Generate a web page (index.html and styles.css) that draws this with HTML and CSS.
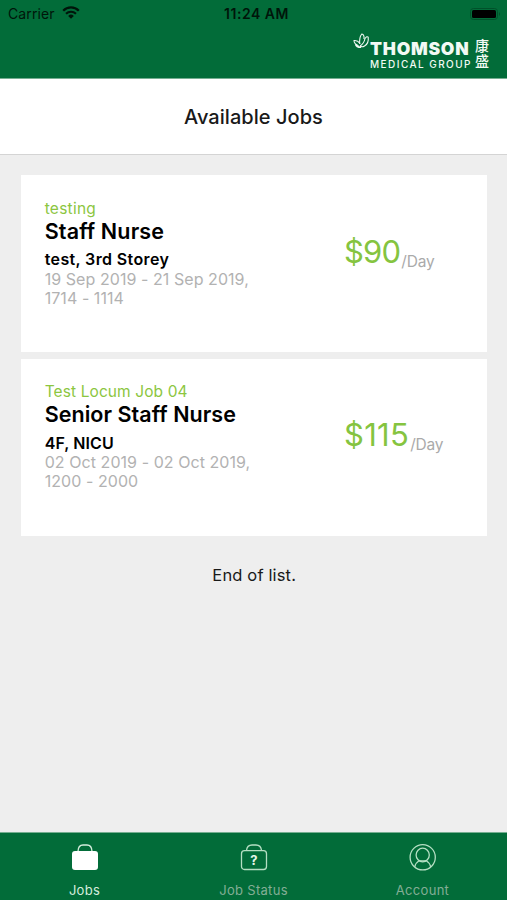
FILE: index.html
```html
<!DOCTYPE html>
<html lang="en">
<head>
<meta charset="utf-8">
<title>Available Jobs</title>
<link rel="stylesheet" href="styles.css">
</head>
<body>
<div class="app">
  <header class="header">
    <div class="status">
      <div class="carrier"><span>Carrier</span>
        <svg class="wifi" viewBox="0 0 18 13" width="18" height="13"><path d="M1.2 4.7a11 11 0 0 1 15.6 0" fill="none" stroke="#00150a" stroke-width="2.3"/><path d="M4 7.7a7.2 7.2 0 0 1 10 0" fill="none" stroke="#00150a" stroke-width="2.1"/><path d="M6.2 9.9a4 4 0 0 1 5.6 0L9 12.7z" fill="#00150a"/></svg>
      </div>
      <div class="time">11:24 AM</div>
      <svg class="battery" viewBox="0 0 33 14" width="33" height="14"><rect x="1.5" y="1.5" width="27" height="11" rx="3" fill="none" stroke="#00512a"/><rect x="3" y="3" width="24" height="8" rx="1.5" fill="#000"/><path d="M30 5q2 2 0 4z" fill="#00512a"/></svg>
    </div>
    <div class="brand">
      <svg class="butterfly" viewBox="0 0 17 17" width="17" height="17" fill="none" stroke="#f2faf4" stroke-width="1.1"><path d="M6.8 11Q6 4.5 8.8 1Q11.5 1.6 11 6"/><path d="M7 10.5Q4.5 7 1 7.6Q1 11 5.5 12.8"/><path d="M7 13Q11 10.5 12 5.5Q14 2.8 15.2 4.2Q16 10.5 11.5 13Q9 14.5 7 13"/><path d="M2.6 11.2Q3.3 14.2 8 14.2" stroke-width="1.6"/></svg>
      <div class="wordmark"><div class="thomson">THOMSON</div><div class="group">MEDICAL GROUP</div></div>
      <div class="hanzi"><span>康</span><span>盛</span></div>
    </div>
  </header>
  <h1 class="title">Available Jobs</h1>
  <main class="list">
    <article class="card">
      <div class="details">
        <div class="tag testing">testing</div>
        <h2 class="role staff">Staff Nurse</h2>
        <div class="place storey">test, 3rd Storey</div>
        <div class="dates">19 Sep 2019 - 21 Sep 2019,<br>1714 - 1114</div>
      </div>
      <div class="pay"><span class="amount short">$90</span><span class="unit">/Day</span></div>
    </article>
    <article class="card second">
      <div class="details">
        <div class="tag">Test Locum Job 04</div>
        <h2 class="role">Senior Staff Nurse</h2>
        <div class="place">4F, NICU</div>
        <div class="dates">02 Oct 2019 - 02 Oct 2019,<br>1200 - 2000</div>
      </div>
      <div class="pay"><span class="amount">$115</span><span class="unit">/Day</span></div>
    </article>
    <p class="end">End of list.</p>
  </main>
  <nav class="tabs">
    <div class="tab active">
      <svg viewBox="0 0 28 28" width="28" height="28"><path d="M7 8.5Q7.2 2 12 2h4q4.8 0 5 6.5" fill="none" stroke="#d5eddd" stroke-width="1.3"/><rect x="1" y="8" width="26" height="19" rx="3" fill="#fff"/></svg>
      <span>Jobs</span>
    </div>
    <div class="tab">
      <svg viewBox="0 0 28 28" width="28" height="28"><g fill="none" stroke="#b5dfc3" stroke-width="1.3"><path d="M6.5 7.5Q7 2 12 2h4q5 0 5.5 5.5"/><rect x="1.5" y="7.7" width="25" height="18.8" rx="3"/></g><text class="question" x="14" y="21.7" text-anchor="middle" fill="#e4f5e9">?</text></svg>
      <span>Job Status</span>
    </div>
    <div class="tab">
      <svg viewBox="0 0 28 28" width="28" height="28" fill="none" stroke="#b5dfc3" stroke-width="1.3"><circle cx="13.7" cy="14.3" r="12.6"/><ellipse cx="13.7" cy="12" rx="6.6" ry="6.8"/><path d="M5.7 24q1-4.3 4.4-6.2h7.2q3.4 1.9 4.4 6.2"/></svg>
      <span>Account</span>
    </div>
  </nav>
</div>
</body>
</html>
```

FILE: styles.css
```css
* { box-sizing: border-box; }
body { margin: 0; font-family: Inter, "Liberation Sans", sans-serif; background: #eee; color: #000; }
h1, h2, p { margin: 0; }
.app { height: 900px; display: flex; flex-direction: column; overflow: hidden; }
.header { height: 79px; background: #026c39; border-bottom: 1px solid #75ae91; }
.status { height: 27px; display: grid; grid-template-columns: 1fr auto 1fr; align-items: center; padding: 0 5px 0 8px; color: #00150a; }
.carrier { display: flex; align-items: center; gap: 7px; font-size: 14px; letter-spacing: .1px; }
.wifi { display: block; margin-top: -2px; }
.time { font-size: 14px; font-weight: 600; letter-spacing: .5px; padding-left: 3px; }
.battery { justify-self: end; }
.brand { display: flex; justify-content: flex-end; align-items: flex-start; padding-right: 18px; margin-top: 6px; color: #f2faf4; }
.wordmark { width: 105px; padding-top: 7px; }
.thomson { font-size: 17.5px; line-height: 18px; font-weight: 900; letter-spacing: .75px; white-space: nowrap; }
.group { font-size: 10px; line-height: 14px; font-weight: 500; letter-spacing: 1.45px; margin-top: -1px; white-space: nowrap; }
.hanzi { width: 14px; padding-top: 5px; font: 500 14px/15px "Noto Sans CJK TC", sans-serif; display: flex; flex-direction: column; }
.title { height: 76px; background: #fff; border-bottom: 1px solid #d4d4d4; text-align: center; font-size: 20px; line-height: 76px; font-weight: 500; color: #191919; letter-spacing: .05px; }
.list { flex: 1; padding: 20px 20px 0 21.4px; display: flex; flex-direction: column; gap: 6.5px; }
.card { height: 177px; background: #fff; display: flex; padding: 24px 0 0 23.3px; }
.second { padding-top: 23px; }
.details { width: 300px; }
.tag { font-size: 15.5px; line-height: 20px; color: #8cc63f; letter-spacing: .1px; }
.testing { letter-spacing: .25px; }
.role { font-size: 21.5px; line-height: 24px; font-weight: 600; letter-spacing: .05px; }
.staff { letter-spacing: .15px; }
.place { font-size: 16px; line-height: 19px; font-weight: 600; margin-top: 8px; letter-spacing: .1px; }
.storey { letter-spacing: .37px; margin-top: 7px; }
.dates { font-size: 16px; line-height: 19.3px; color: #b2b2b2; letter-spacing: .06px; padding-top: .3px; }
.storey + .dates { padding-top: .8px; }
.pay { margin-top: 34px; display: flex; align-items: flex-start; margin-left: -.7px; }
.second .pay { margin-top: 34.5px; }
.amount { font-size: 31px; line-height: 38px; color: #85c440; letter-spacing: .3px; }
.short { letter-spacing: -.8px; }
.unit { font-size: 15.5px; line-height: 20px; color: #aaa; margin: 19px 0 0 1px; letter-spacing: -.2px; }
.end { text-align: center; font-size: 16.5px; line-height: 20px; margin-top: 22.5px; color: #191919; letter-spacing: .15px; }
.tabs { height: 68px; background: #026c39; border-top: 1px solid #75ae91; display: grid; grid-template-columns: repeat(3, 1fr); }
.tab { display: flex; flex-direction: column; align-items: center; padding-top: 10px; font-size: 13px; line-height: 16px; letter-spacing: .3px; color: #83ae95; }
.tab svg { display: block; }
.tab span { margin-top: 11px; }
.active { color: #d5eddd; }
.question { font-size: 13px; font-weight: 700; letter-spacing: 0; }
```
